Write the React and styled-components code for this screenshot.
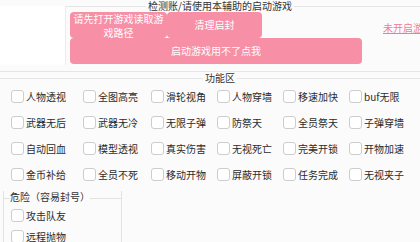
import React from 'react';
import styled, { createGlobalStyle } from 'styled-components';

const GlobalStyle = createGlobalStyle`
  html, body {
    margin: 0;
    padding: 0;
    background: #fbfbfb;
  }
  body {
    font-family: "Noto Sans CJK SC", "Noto Sans", sans-serif;
    color: #2b2b2b;
  }
`;

const S_Page = styled.div`
  width: 420px;
  height: 242px;
  overflow: hidden;
  position: relative;`;

const S_Group = styled.div`
  width: 440px;
  border-bottom: ${p => (p.$closed ? '1px solid #e6e6e6' : 'none')};
  height: ${p => p.$height || 'auto'};
  box-sizing: border-box;`;

const S_Legend = styled.div`
  display: flex;
  align-items: center;
  height: ${p => p.$h || 11}px;
  font-size: 10px;
  line-height: ${p => p.$h || 11}px;
  white-space: nowrap;
  color: #333;
  gap: 2px;
  &::before, &::after {
    content: '';
    flex: 1;
    height: 1px;
    background: #e6e6e6;
    margin-top: 1px;
  }`;

const S_TopBody = styled.div`
  display: flex;
  align-items: flex-start;`;

const S_SidePanel = styled.div`
  width: 65px;
  height: 59px;
  margin-top: -5px;
  background: #fff;
  border-right: 1px solid #ececec;
  margin-right: 4px;`;

const S_ButtonGrid = styled.div`
  display: grid;
  grid-template-columns: 97px 95px 100px;
  grid-template-rows: 26px 26px;
  margin-top: 1px;`;

const S_PinkButton = styled.button`
  grid-column: ${p => p.$span || 'auto'};
  background: #f78fa6;
  border: none;
  border-radius: 4px;
  color: #fff;
  font-family: inherit;
  font-size: 10px;
  line-height: 14px;
  padding: 0 3px;
  overflow: visible;
  cursor: pointer;`;

const S_Link = styled.a`
  margin-left: 21px;
  margin-top: 11px;
  font-size: 10px;
  line-height: 12px;
  color: #f27b98;
  text-decoration: underline;
  white-space: nowrap;`;

const S_CheckGrid = styled.div`
  display: grid;
  grid-template-columns: 72px 68px 66px 66px 66px 66px;
  grid-auto-rows: 26px;
  padding-left: 11px;`;

const S_CheckItem = styled.label`
  display: flex;
  align-items: center;
  gap: 2px;
  font-size: 10px;
  white-space: nowrap;
  color: #2b2b2b;`;

const S_Box = styled.span`
  width: 13px;
  height: 13px;
  box-sizing: border-box;
  border: 1px solid #cdcdcd;
  border-radius: 3px;
  background: #fff;
  flex: none;`;

const S_DangerBox = styled.div`
  width: 119px;
  margin: 4px 0 0 3px;
  border-left: 1px solid #e2e2e2;
  border-right: 1px solid #e2e2e2;
  height: 60px;
  box-sizing: border-box;`;

const S_DangerLegend = styled.div`
  display: flex;
  align-items: center;
  height: 12px;
  line-height: 12px;
  margin-left: -1px;
  margin-right: -1px;
  font-size: 10px;
  color: #333;
  white-space: nowrap;
  &::before {
    content: '';
    width: 7px;
    height: 1px;
    background: #e2e2e2;
    margin-top: 2px;
  }
  &::after {
    content: '';
    flex: 1;
    height: 1px;
    background: #e2e2e2;
    margin-top: 2px;
  }`;

const S_DangerList = styled.div`
  display: grid;
  grid-auto-rows: 21px;
  padding: 2px 0 0 7px;`;

const features = [
  '人物透视', '全图高亮', '滑轮视角', '人物穿墙', '移速加快', 'buf无限',
  '武器无后', '武器无冷', '无限子弹', '防祭天', '全员祭天', '子弹穿墙',
  '自动回血', '模型透视', '真实伤害', '无视死亡', '完美开锁', '开物加速',
  '金币补给', '全员不死', '移动开物', '屏蔽开锁', '任务完成', '无视夹子'
];

const danger = ['攻击队友', '远程抛物'];

const Check = ({ label }) => (
  <S_CheckItem>
    <S_Box />
    <span>{label}</span>
  </S_CheckItem>
);

const App = () => {
  return (
    <S_Page>
      <GlobalStyle />
      <S_Group $closed $height="72px">
        <S_Legend>检测账/请使用本辅助的启动游戏</S_Legend>
        <S_TopBody>
          <S_SidePanel />
          <S_ButtonGrid>
            <S_PinkButton>请先打开游戏读取游戏路径</S_PinkButton>
            <S_PinkButton>清理启封</S_PinkButton>
            <S_PinkButton $span="1 / span 3">启动游戏用不了点我</S_PinkButton>
          </S_ButtonGrid>
          <S_Link>未开启游戏</S_Link>
        </S_TopBody>
      </S_Group>
      <S_Group>
        <S_Legend $h={11}>功能区</S_Legend>
        <S_CheckGrid>
          {features.map(f => <Check key={f} label={f} />)}
        </S_CheckGrid>
      </S_Group>
      <S_DangerBox>
        <S_DangerLegend>危险（容易封号）</S_DangerLegend>
        <S_DangerList>
          {danger.map(d => <Check key={d} label={d} />)}
        </S_DangerList>
      </S_DangerBox>
    </S_Page>
  );
};

export default App;
